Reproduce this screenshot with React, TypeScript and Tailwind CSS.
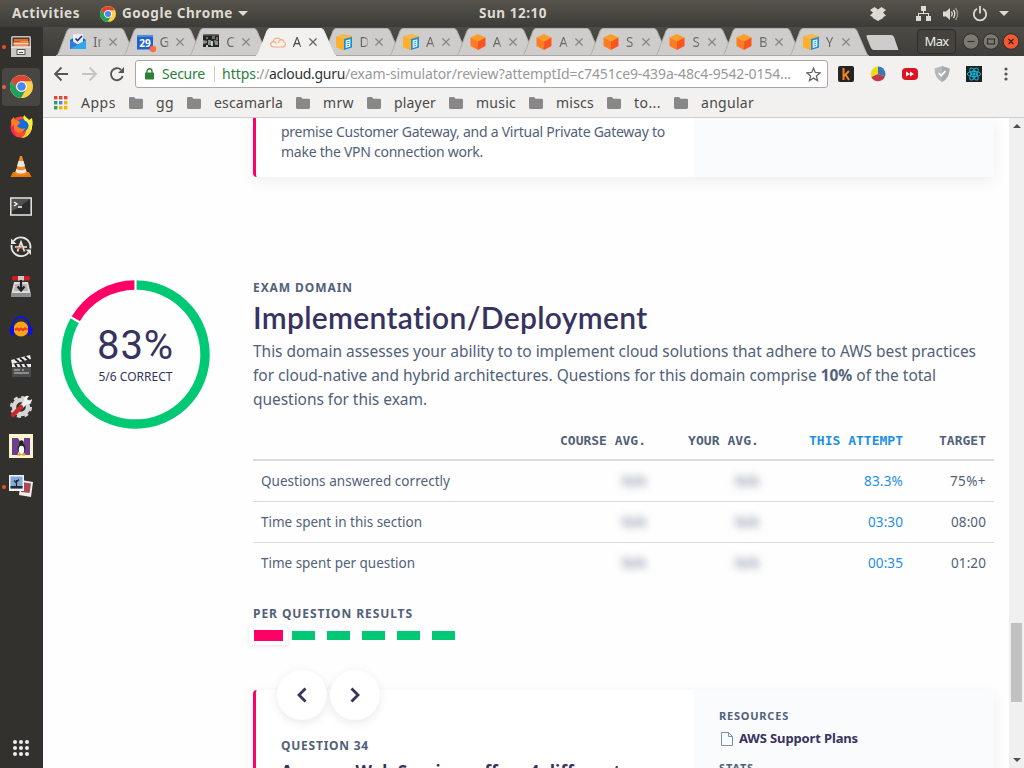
import { useLayoutEffect, useRef, type ReactNode } from "react";

/* Single line of text whose tracking is tuned so that it spans `w` pixels. */
function Fit({ w, className = "", children }: { w: number; className?: string; children: ReactNode }) {
  const ref = useRef<HTMLSpanElement>(null);
  useLayoutEffect(() => {
    const el = ref.current;
    if (!el) return;
    el.style.letterSpacing = "0px";
    const n = (el.textContent || "").length;
    const natural = el.getBoundingClientRect().width;
    el.style.letterSpacing = `${(w - natural) / Math.max(1, n)}px`;
  }, [w]);
  return (
    <span ref={ref} className={`inline-block whitespace-pre ${className}`}>
      {children}
    </span>
  );
}

function Chrome({ size }: { size: number }) {
  return (
    <svg width={size} height={size} viewBox="0 0 24 24">
      <circle cx="12" cy="12" r="12" fill="#fdd04c" />
      <path d="M1.6 6A12 12 0 0 1 22.4 6.5H12A5.5 5.5 0 0 0 7.24 14.75Z" fill="#dc4437" />
      <path d="M1.6 6L7.24 14.75A5.5 5.5 0 0 0 16.76 14.75L11.5 24A12 12 0 0 1 1.6 6Z" fill="#1fa15d" />
      <circle cx="12" cy="12" r="5.6" fill="#fff" />
      <circle cx="12" cy="12" r="4.5" fill="#4687f4" />
    </svg>
  );
}

function TopBar() {
  return (
    <header className="flex h-[27px] shrink-0 items-center bg-linear-to-b from-[#57544c] to-[#3d3c38] text-[13.5px] font-bold text-[#dfdbd2]">
      <div className="flex w-[479px] items-center pl-3">
        <Fit w={68}>Activities</Fit>
        <span className="ml-5 mr-[6px] flex"><Chrome size={16} /></span>
        <Fit w={111}>Google Chrome</Fit>
        <svg className="ml-[5px]" width="10" height="5" viewBox="0 0 10 5"><path d="M0 0H10L5 5Z" fill="#dfdbd2" /></svg>
      </div>
      <Fit w={68}>Sun 12:10</Fit>
      <div className="ml-auto flex items-center pr-[15px]">
        <svg width="16" height="14" viewBox="0 0 16 14" fill="#dfdbd2">
          <path d="M4.5 0L8 2.5L11.5 0L16 3L13 5.6L16 8.5L13.2 10.2V11L8 14L2.8 11V10.2L0 8.5L3 5.6L0 3Z" />
        </svg>
        <svg className="ml-[30px]" width="15" height="15" viewBox="0 0 15 15" fill="#dfdbd2">
          <path d="M5 0H10V5H5ZM0 10H5V15H0ZM10 10H15V15H10ZM7 5H8V8H7ZM2 7H13V10H12V8H3V10H2Z" />
        </svg>
        <svg className="ml-[12px]" width="16" height="14" viewBox="0 0 16 14" fill="none" stroke="#dfdbd2" strokeWidth="1.4">
          <path d="M0 4.5H3L7 1V13L3 9.5H0Z" fill="#dfdbd2" stroke="none" />
          <path d="M8.5 4.5Q10 7 8.5 9.5M10.5 2.8Q13 7 10.5 11.2" />
          <path d="M12.6 1Q16.5 7 12.6 13" opacity=".5" />
        </svg>
        <svg className="ml-[13px]" width="16" height="16" viewBox="0 0 16 16" fill="none" stroke="#dfdbd2" strokeWidth="1.8">
          <path d="M5 2.7A6.2 6.2 0 1 0 11 2.7M8 0V7.5" />
        </svg>
        <svg className="ml-[11px]" width="10" height="5" viewBox="0 0 10 5"><path d="M0 0H10L5 5Z" fill="#dfdbd2" /></svg>
      </div>
    </header>
  );
}

const launcherIcons: { running?: boolean; active?: boolean; art: ReactNode }[] = [
  {
    running: true,
    art: (
      <>
        <rect x="1" y="1" width="20" height="21" rx="1.5" fill="#c4c2be" />
        <rect x="2.5" y="2.5" width="17" height="9.5" fill="#4b3a32" />
        <path d="M4 4H18V6H4Z" fill="#e9692c" />
        <path d="M3.5 6.5H10L11 6H18.5V12H3.5Z" fill="#f08a50" />
        <path d="M3.5 8H18.5V9.3H3.5Z" fill="#fbd0b0" />
        <rect x="1" y="11.5" width="20" height="10.5" fill="#c9c7c4" />
        <path d="M1 11.5H21V12.7H1Z" fill="#eee" />
        <rect x="7" y="14.5" width="8" height="5" fill="#eee" stroke="#555" />
        <path d="M9 17.5H13" stroke="#555" />
      </>
    ),
  },
  { running: true, active: true, art: <g /> },
  {
    art: (
      <>
        <circle cx="11" cy="12" r="10.5" fill="#ff4a2f" />
        <path d="M13 1Q23 5 22 14Q19 23 11 23Q16 20 16 15Z" fill="#ffd22e" />
        <circle cx="12" cy="10.5" r="6.5" fill="#166bd6" />
        <path d="M1 5L4 2L5 5Q9 5 10 8L7 11Q10 15 15 13Q13 19 7 17Q1 14 1 5Z" fill="#ff7a22" />
        <path d="M1 12Q1 20 8 22.5Q3 17 4 10Z" fill="#f81f63" />
        <path d="M14 0L19 5L22 3Q24 11 20 16Q20 7 14 5Z" fill="#fff13d" />
      </>
    ),
  },
  {
    art: (
      <>
        <path d="M3 17H19L21.5 22H.5Z" fill="#e87810" />
        <path d="M10 1H12L17 19Q11 22 5 19Z" fill="#f58a16" />
        <path d="M8.5 6H13.5L15 11Q11 13 7 11ZM6.3 14Q11 16.5 15.8 14L16.5 17Q11 20 5.4 17Z" fill="#e8e8e8" />
      </>
    ),
  },
  {
    art: (
      <>
        <rect x=".8" y="3" width="20.4" height="17" fill="#2c2c2c" stroke="#dedede" strokeWidth="1.6" />
        <path d="M2 4H20L8 13L2 16Z" fill="#505050" />
        <path d="M4 7L7 9L4 11M8 12H12" stroke="#fff" strokeWidth="1.3" fill="none" />
      </>
    ),
  },
  {
    art: (
      <>
        <path d="M3.5 6A9.5 9.5 0 0 1 20.3 13.5M18.5 17.5A9.5 9.5 0 0 1 1.7 10" fill="none" stroke="#e4e4e4" strokeWidth="2" />
        <path d="M1 3.5V9H6.5ZM21 20V14.5H15.5Z" fill="#e4e4e4" />
        <path d="M7.5 16.5L11 7L14.5 16.5" fill="none" stroke="#e4e4e4" strokeWidth="1.8" />
        <path d="M5 12H17" stroke="#e4e4e4" strokeWidth="1.6" />
        <path d="M6 13H13" stroke="#e95420" strokeWidth="1.2" />
      </>
    ),
  },
  {
    art: (
      <>
        <path d="M4 7H18L21 20H1Z" fill="#ddd" />
        <path d="M5 9H17L18 16H4Z" fill="#b5b5b5" />
        <path d="M1 18H21V22H1Z" fill="#8d8d8d" />
        <rect x="2" y="1" width="18" height="4.5" rx="2" fill="#d31b1b" />
        <rect x="8" y="1" width="6" height="4.5" fill="#c9c9c9" />
        <path d="M11 5V14M7.5 11.5L11 15.5L14.5 11.5" stroke="#222" strokeWidth="2.2" fill="none" />
      </>
    ),
  },
  {
    art: (
      <>
        <circle cx="11" cy="14" r="7.5" fill="#f5a51d" />
        <path d="M5 15L7 13.5L9 15L11 13.5L13 15L15 13.5L17.5 14.5" stroke="#f03c16" strokeWidth="2.2" fill="none" />
        <path d="M3 13V9Q5 2 11 2Q17 2 19 9V13" fill="none" stroke="#0918d8" strokeWidth="1.8" />
        <path d="M4 11V21Q-1 20 -.5 14Q0 11 4 11ZM18 11V21Q23 20 22.5 14Q22 11 18 11Z" fill="#0b10e8" />
      </>
    ),
  },
  {
    art: (
      <>
        <path d="M1 5L20 0L21 4L2 9Z" fill="#eee" />
        <path d="M5 4L9 7M10 3L14 6M15 1.5L19 5" stroke="#222" strokeWidth="2" />
        <rect x="2" y="9" width="19" height="13" fill="#4c4c4c" />
        <path d="M2 9H21V12H2Z" fill="#eee" />
        <path d="M5 9L7 12M10 9L12 12M15 9L17 12" stroke="#222" strokeWidth="2" />
        <path d="M4 15H10M12 15H14M4 18H19" stroke="#ccc" strokeWidth="1" />
      </>
    ),
  },
  {
    art: (
      <>
        <circle cx="11" cy="12" r="7" fill="none" stroke="#d6d6d6" strokeWidth="4.5" />
        <circle cx="11" cy="12" r="9.8" fill="none" stroke="#d6d6d6" strokeWidth="2.5" strokeDasharray="4 3.7" />
        <path d="M11 12L17 6" stroke="#f3f3f3" strokeWidth="4" />
        <path d="M14 4Q15 0 19 1L17 4L19 6L22 4Q22 9 17 9Z" fill="#f3f3f3" />
        <path d="M3 20L11 12" stroke="#c92a2a" strokeWidth="4.5" strokeLinecap="round" />
      </>
    ),
  },
  {
    art: (
      <>
        <rect x="-1" y="-1" width="24" height="24" fill="#fdf3cf" />
        <path d="M2 3H8L14 14V3H20V20H15L8 9V20H2Z" fill="#6c3f8c" />
        <ellipse cx="11.5" cy="13.5" rx="3.8" ry="6" fill="#222" />
        <ellipse cx="11.5" cy="15" rx="2.7" ry="4.2" fill="#fff" />
        <circle cx="11.5" cy="7.5" r="2.3" fill="#222" />
        <path d="M7.5 18.5H11V20.5H7.5ZM12 18.5H15.5V20.5H12Z" fill="#f0a020" />
      </>
    ),
  },
  {
    running: true,
    art: (
      <>
        <path d="M11 5L23 7L21 22L9 20Z" fill="#eee" />
        <path d="M12 7L21 8.5L19.5 18L11 17Z" fill="#a84a55" />
        <rect x="-1" y="0" width="15" height="16" fill="#f3f3f3" />
        <rect x=".5" y="1.5" width="12" height="12" fill="#7fabd8" />
        <path d="M.5 11H12.5V13.5H.5Z" fill="#262b33" />
        <path d="M6.5 11V5M6.5 8L4 5.5M6.5 7L9 4.5" stroke="#20252d" strokeWidth="1.2" />
      </>
    ),
  },
];

function Launcher() {
  return (
    <aside className="flex w-[43px] shrink-0 flex-col bg-[#33312e]">
      {launcherIcons.map((it, i) => (
        <div key={i} className="flex h-10 shrink-0 items-center pb-px">
          <span className={`ml-[2px] size-1 shrink-0 rounded-full ${it.running ? "bg-[#e95420]" : ""}`} />
          <div className={`-ml-1 flex h-[38px] w-[38px] shrink-0 items-center justify-center rounded-[4px] ${it.active ? "bg-white/10" : ""}`}>
            {it.active ? (
              <Chrome size={23} />
            ) : (
              <svg width="22" height="23" viewBox="0 0 22 23" className="overflow-visible">{it.art}</svg>
            )}
          </div>
        </div>
      ))}
      <div className="mt-auto mb-[12px] ml-[13px] grid w-4 grid-cols-3 gap-[2px]">
        {Array.from({ length: 9 }, (_, i) => (
          <span key={i} className="size-1 rounded-full bg-[#eeeeec]" />
        ))}
      </div>
    </aside>
  );
}

const orangeCube = (
  <>
    <path d="M8 0L15.5 3.5L8 7.5L.5 3.5Z" fill="#ff9d24" />
    <path d="M.5 3.5L8 7.5V16L.5 12Z" fill="#ff7b22" />
    <path d="M15.5 3.5L8 7.5V16L15.5 12Z" fill="#fb551f" />
  </>
);
const docCube = (
  <>
    <path d="M0 3L7 0L16 2V12L7 16L0 13Z" fill="#f9a825" />
    <path d="M0 3L8 5V15.7L0 13Z" fill="#fdb02a" />
    <path d="M0 3L7 0L16 2L8 5Z" fill="#f6b84f" />
    <path d="M8 5L16 3V13.5L8 16Z" fill="#1593cf" />
    <path d="M9.7 6.5L14.3 5.2V12.5L9.7 14Z" fill="#fff" />
    <path d="M10.5 8L13.5 7.2M10.5 10L13.5 9.2M10.5 12L13 11.3" stroke="#1593cf" strokeWidth=".9" />
  </>
);

const tabs: { t: string; active?: boolean; icon: ReactNode }[] = [
  {
    t: "In",
    icon: (
      <>
        <path d="M0 6L8 1L16 6V15H0Z" fill="#1d64c8" />
        <path d="M3 0H13V9L8 12L3 9Z" fill="#e9eef5" />
        <path d="M5.5 4.5L7.5 6.5L12 2" stroke="#222f91" strokeWidth="1.6" fill="none" />
        <path d="M0 6L8 10.5L16 6V15H0Z" fill="#3478d8" />
        <path d="M0 15L16 6V15Z" fill="#2fa7ee" />
      </>
    ),
  },
  {
    t: "G",
    icon: (
      <>
        <rect width="16" height="14.5" y="1" fill="#1e63cc" />
        <path d="M0 1H16V3H0Z" fill="#4c89df" />
        <text x="8" y="12.5" textAnchor="middle" fontSize="10" fontWeight="700" fill="#fff">29</text>
        <circle cx="16" cy="15" r="3.2" fill="#ff6d3f" />
      </>
    ),
  },
  {
    t: "C",
    icon: (
      <>
        <rect width="16" height="16" fill="#232523" />
        <path d="M0 0H16V1.5H0ZM3 3H5V5H3ZM9 2H12V5H9ZM13 3H15V6H13Z" fill="#6d706a" />
        <path d="M0 6L4 7V9L0 10ZM5 6H8V11H5ZM11 6L15 7V11H12Z" fill="#8d908a" />
        <path d="M0 13H16V16H0ZM8 7H10V12H8ZM3 11H5V14H3Z" fill="#c7cac5" />
      </>
    ),
  },
  {
    t: "A",
    active: true,
    icon: (
      <path d="M4 13Q.7 13 .7 10.3Q.7 8 3.2 7.6Q4 4 7.5 4Q9.5 4 10.8 5.8Q13 5.3 13.7 7.7Q15.5 8.3 15.4 10.4Q15.2 13 12.5 13ZM3.2 7.6Q5.5 7.5 6.5 9.5M10.8 5.8Q8.6 6.8 8.5 9" fill="none" stroke="#fba978" strokeWidth="1.2" />
    ),
  },
  { t: "D", icon: docCube },
  { t: "A", icon: docCube },
  { t: "A", icon: orangeCube },
  { t: "A", icon: orangeCube },
  { t: "S", icon: orangeCube },
  { t: "S", icon: orangeCube },
  { t: "B", icon: orangeCube },
  { t: "Y", icon: docCube },
];

function TabStrip() {
  return (
    <div className="flex h-[29px] items-end bg-linear-to-b from-[#4d4b45] to-[#3e3d39] pl-[13px]">
      {tabs.map(({ t, active, icon }, i) => (
        <div key={i} className={`relative -mr-[13.4px] flex h-7 w-20 shrink-0 items-center pl-[14px] ${active ? "z-10" : ""}`}>
          <svg className="absolute inset-0" width="80" height="28" viewBox="0 0 80 28">
            <path d="M0 28Q2 27 3 24L11 3Q12 .5 14 .5H65Q67 .5 68 3L77 24Q78 27 80 28Z" fill={active ? "#f2f1f0" : "#cfcdcb"} stroke={active ? "#f2f1f0" : "#b1afac"} />
            {!active && <path d="M0 27.5H80" stroke="#aaa8a5" />}
          </svg>
          <svg className="relative overflow-visible" width="16" height="16" viewBox="0 0 16 16">{icon}</svg>
          <span className={`relative ml-[7px] flex w-[9px] overflow-hidden bg-clip-text text-[13.5px] leading-5 whitespace-nowrap text-transparent bg-linear-to-r ${active ? "from-[#444] from-70% to-[#bbb]" : "from-[#666] from-60% to-[#aaa]"}`}>{t}</span>
          <svg className="relative ml-[7px]" width="8" height="8" viewBox="0 0 8 8">
            <path d="M.4 .4L7.6 7.6M7.6 .4L.4 7.6" stroke={active ? "#666" : "#888"} strokeWidth="1.3" />
          </svg>
        </div>
      ))}
      <svg className="mb-[6px] ml-[11px]" width="33" height="15" viewBox="0 0 33 15">
        <path d="M2 0H25Q27 0 28 2L32.5 15H8Q6 15 5 13L.5 2Q0 0 2 0Z" fill="#cfcdcb" />
      </svg>
      <div className="mr-[4px] ml-auto flex h-full items-center">
        <span className="mr-[7px] flex h-[25px] w-[39px] items-center justify-center rounded-[4px] border border-[#2c2b28] bg-[#43423d] text-[13px] text-[#eeece7]">
          <Fit w={24}>Max</Fit>
        </span>
        <svg width="57" height="17" viewBox="0 0 57 17" fill="none">
          <circle cx="8" cy="8.5" r="7.8" fill="#7c7970" stroke="#302f2c" />
          <path d="M4.5 8.5H11.5" stroke="#33322e" strokeWidth="1.2" />
          <circle cx="28" cy="8.5" r="7.8" fill="#7c7970" stroke="#302f2c" />
          <rect x="24.5" y="6" width="7" height="5" stroke="#33322e" strokeWidth="1.2" />
          <circle cx="48" cy="8.5" r="7.8" fill="#ef5a32" stroke="#302f2c" />
          <path d="M45.5 6L50.5 11M50.5 6L45.5 11" stroke="#4b1d10" strokeWidth="1.3" />
        </svg>
      </div>
    </div>
  );
}

function AddressBar() {
  return (
    <div className="flex h-[36px] items-center pl-[11px]">
      <svg width="70" height="16" viewBox="0 0 70 16" fill="none" strokeWidth="1.9">
        <path d="M14 8H1.5M7.5 1.5L1 8L7.5 14.5" stroke="#555" />
        <path d="M28 8H41.5M35.5 1.5L42 8L35.5 14.5" stroke="#c5c4c2" />
        <path d="M68.7 10A6 6 0 1 1 67 3.7" stroke="#555" />
        <path d="M70 1V7H64Z" fill="#555" />
      </svg>
      <div className="ml-[11px] flex h-7 w-[693px] items-center rounded-[3px] border border-[#a9a8a7] bg-white text-[14px]">
        <svg className="ml-[9px]" width="9" height="12" viewBox="0 0 9 12">
          <path d="M2 5V3.2A2.5 2.5 0 0 1 7 3.2V5" fill="none" stroke="#2c8038" strokeWidth="1.4" />
          <rect y="4.5" width="9" height="7" rx=".8" fill="#2c8038" />
        </svg>
        <Fit w={43} className="mb-[2px] ml-[8px] text-[#2c8038]">Secure</Fit>
        <span className="mr-[7px] ml-[9px] h-4 w-px bg-[#ccc]" />
        <Fit w={34} className="mb-[2px] text-[#2c8038]">https</Fit>
        <Fit w={13} className="mb-[2px] text-[#999]">://</Fit>
        <Fit w={76} className="mb-[2px] text-[#333]">acloud.guru</Fit>
        <Fit w={446} className="mb-[2px] text-[#999]">/exam-simulator/review?attemptId=c7451ce9-439a-48c4-9542-0154...</Fit>
        <svg className="mr-[6px] ml-auto" width="15" height="15" viewBox="0 0 15 15">
          <path d="M7.5 1.2L9.3 5.5L14 5.9L10.4 9L11.5 13.6L7.5 11.1L3.5 13.6L4.6 9L1 5.9L5.7 5.5Z" fill="none" stroke="#666" strokeWidth="1.3" />
        </svg>
      </div>
      <div className="ml-[10px] flex items-center gap-4">
        <svg width="16" height="16" viewBox="0 0 16 16">
          <rect width="16" height="16" rx="2" fill="#242424" />
          <path d="M5.5 2V14M11 5L6 10M7.5 8.5L11 14" stroke="#f5831f" strokeWidth="2" fill="none" />
        </svg>
        <svg width="16" height="16" viewBox="0 0 16 16">
          <path d="M8 8V.5A7.5 7.5 0 0 0 1.3 11Z" fill="#eedc18" />
          <path d="M8 8V.5A7.5 7.5 0 0 1 15 10.5Z" fill="#3778b5" />
          <path d="M8 8L15 10.5A7.5 7.5 0 0 1 1.3 11Z" fill="#c23b44" />
        </svg>
        <svg width="16" height="16" viewBox="0 0 16 16">
          <rect y="2" width="16" height="12" rx="4" fill="#dc1523" />
          <path d="M4 5.5L8 8L4 10.5ZM8 5.5L12 8L8 10.5Z" fill="#fff" />
        </svg>
        <svg width="16" height="16" viewBox="0 0 16 16">
          <path d="M8 0L15.5 2.5Q15.5 12 8 16Q.5 12 .5 2.5Z" fill="#b7b8b9" />
          <path d="M8 0L15.5 2.5Q15.5 12 8 16Z" fill="#a9aaab" />
          <path d="M4.7 7L7.2 9.7L11.5 5" stroke="#fff" strokeWidth="1.8" fill="none" />
        </svg>
        <svg width="16" height="16" viewBox="0 0 16 16" fill="none" stroke="#17b6d4">
          <rect width="16" height="16" fill="#1f1f24" stroke="none" />
          <ellipse cx="8" cy="8" rx="6.7" ry="2.6" />
          <ellipse cx="8" cy="8" rx="6.7" ry="2.6" transform="rotate(60 8 8)" />
          <ellipse cx="8" cy="8" rx="6.7" ry="2.6" transform="rotate(120 8 8)" />
          <circle cx="8" cy="8" r="1.2" fill="#17b6d4" />
        </svg>
        <svg width="16" height="16" viewBox="0 0 16 16" fill="#555">
          <circle cx="8" cy="3" r="1.6" /><circle cx="8" cy="8" r="1.6" /><circle cx="8" cy="13" r="1.6" />
        </svg>
      </div>
    </div>
  );
}

const bookmarks: [string, number][] = [
  ["gg", 18], ["escamarla", 69], ["mrw", 31], ["player", 42], ["music", 40], ["miscs", 38], ["to...", 27], ["angular", 53],
];
const appDots = ["#e8453c", "#e8453c", "#e8453c", "#2c9f58", "#4285f4", "#f4b400", "#2c9f58", "#f4b400", "#f4b400"];

function Bookmarks() {
  return (
    <div className="flex h-[26px] items-center gap-[13px] border-b border-[#cfcecd] pb-[4px] pl-[11px] text-[14px] text-[#4a4a4a]">
      <svg width="14" height="14" viewBox="0 0 14 14">
        {appDots.map((c, i) => <rect key={i} x={(i % 3) * 5} y={Math.floor(i / 3) * 5} width="3.4" height="3.4" fill={c} />)}
      </svg>
      <Fit w={35}>Apps</Fit>
      {bookmarks.map(([n, w]) => (
        <div key={n} className="flex items-center gap-[13px]">
          <svg width="14" height="12" viewBox="0 0 14 12"><path d="M1.3 0H5L6.5 1.7H12.7Q14 1.7 14 3V10.6Q14 12 12.7 12H1.3Q0 12 0 10.6V1.3Q0 0 1.3 0Z" fill="#888" /></svg>
          <Fit w={w}>{n}</Fit>
        </div>
      ))}
    </div>
  );
}

function Donut() {
  const pt = (deg: number, r: number) => {
    const a = (deg * Math.PI) / 180;
    return `${75 + r * Math.sin(a)} ${75 - r * Math.cos(a)}`;
  };
  return (
    <div className="relative size-[149px]">
      <svg width="149" height="149" viewBox="0 0 150 150" fill="none">
        <path d={`M${pt(0, 70)}A70 70 0 1 1 ${pt(300, 70)}`} stroke="#00c873" strokeWidth="9.5" />
        <path d={`M${pt(300, 70)}A70 70 0 0 1 ${pt(0, 70)}`} stroke="#ff0066" strokeWidth="9.5" />
        <path d={`M${pt(0, 64)}L${pt(0, 76)}M${pt(300, 64)}L${pt(300, 76)}`} stroke="#fefefe" strokeWidth="2.2" />
      </svg>
      <div className="absolute inset-0 flex flex-col items-center pt-[44px] text-[#36335f]">
        <Fit w={77} className="font-[Roboto] text-[40px] leading-[44px]">83%</Fit>
        <Fit w={74} className="text-[12px] leading-[17px]">5/6 CORRECT</Fit>
      </div>
    </div>
  );
}

const rows = [
  { label: "Questions answered correctly", lw: 189, a: "83.3%", aw: 39, t: "75%+", tw: 36 },
  { label: "Time spent in this section", lw: 161, a: "03:30", aw: 35, t: "08:00", tw: 35 },
  { label: "Time spent per question", lw: 154, a: "00:35", aw: 35, t: "01:20", tw: 35 },
];
const cols = "grid grid-cols-[1fr_120px_113px_144px_83px] items-center pr-2 text-right";

function Stats() {
  return (
    <div className="mt-[15px]">
      <div className={`${cols} h-[37px] border-b-2 border-[#dadbdd] pb-[2px] font-['DejaVu_Sans_Mono',monospace] text-[13px] font-bold text-[#51617a]`}>
        <span />
        <Fit w={86} className="justify-self-end">COURSE AVG.</Fit>
        <Fit w={71} className="justify-self-end">YOUR AVG.</Fit>
        <Fit w={94} className="justify-self-end text-[#1f8fe6]">THIS ATTEMPT</Fit>
        <Fit w={47} className="justify-self-end">TARGET</Fit>
      </div>
      {rows.map((r, i) => (
        <div key={r.label} className={`${cols} ${i < 2 ? "border-b border-[#dadbdd]" : ""} h-[41px] text-[13.5px] text-[#51617a]`}>
          <Fit w={r.lw} className="ml-2 justify-self-start">{r.label}</Fit>
          <span className="blur-[4px]">N/A</span>
          <span className="blur-[4px]">N/A</span>
          <Fit w={r.aw} className="justify-self-end text-[#1f8fe6]">{r.a}</Fit>
          <Fit w={r.tw} className="justify-self-end">{r.t}</Fit>
        </div>
      ))}
    </div>
  );
}

function RoundButton({ d }: { d: string }) {
  return (
    <button className="flex size-[50px] items-center justify-center rounded-full bg-white shadow-[0_3px_10px_rgba(50,50,93,0.1)]">
      <svg width="12" height="16" viewBox="0 0 12 16"><path d={d} fill="none" stroke="#36335f" strokeWidth="2.8" /></svg>
    </button>
  );
}

function Page() {
  return (
    <main className="flex min-h-0 flex-1 overflow-hidden bg-[#fefefe]">
      <div className="flex w-[966px] shrink-0 pl-[18px] text-[#51617a]">
        <div className="w-[192px] shrink-0 pt-[162px]"><Donut /></div>
        <div className="w-[741px] shrink-0">
          <section className="flex h-[59px] rounded-b-[4px] border-l-[3px] border-[#ff0066] bg-white shadow-[0_4px_14px_rgba(50,50,93,0.08)]">
            <div className="flex w-[438px] flex-col pt-1 pl-[25px] text-[14px] leading-5">
              <Fit w={384} className="self-start">premise Customer Gateway, and a Virtual Private Gateway to</Fit>
              <Fit w={202} className="self-start">make the VPN connection work.</Fit>
            </div>
            <div className="flex-1 rounded-br-[4px] bg-[#fafbfd]" />
          </section>

          <div className="flex h-[232px] flex-col items-start pt-[102px]">
            <Fit w={100} className="text-[12px] leading-[18px] font-bold">EXAM DOMAIN</Fit>
            <Fit w={395} className="mt-[1px] font-[Lato] text-[30px] leading-[38px] font-semibold text-[#36335f]">Implementation/Deployment</Fit>
            <div className="mt-[3px] flex flex-col items-start text-[15.5px] leading-6">
              <Fit w={723}>This domain assesses your ability to to implement cloud solutions that adhere to AWS best practices</Fit>
              <Fit w={683}>for cloud-native and hybrid architectures. Questions for this domain comprise <b>10%</b> of the total</Fit>
              <Fit w={174}>questions for this exam.</Fit>
            </div>
          </div>

          <Stats />

          <div className="flex h-[106px] flex-col items-start pt-[21px]">
            <Fit w={160} className="text-[12px] leading-[18px] font-bold">PER QUESTION RESULTS</Fit>
            <div className="mt-[3px] flex h-[19px] items-center">
              <span className="-ml-1 mr-1 flex h-[19px] w-[39px] items-center justify-center bg-white shadow-[0_1px_4px_rgba(50,50,93,0.12)]">
                <i className="h-[11px] w-[29px] bg-[#ff0066]" />
              </span>
              {[0, 1, 2, 3, 4].map((i) => <i key={i} className="mr-3 h-[9px] w-[23px] bg-[#00c873]" />)}
            </div>
          </div>

          <section className="relative flex h-[120px] rounded-t-[4px] border-l-[3px] border-[#ff0066] bg-white shadow-[0_4px_14px_rgba(50,50,93,0.08)]">
            <div className="flex w-[438px] flex-col items-start pt-[47px] pl-[25px]">
              <Fit w={88} className="text-[12px] leading-[18px] font-bold">QUESTION 34</Fit>
              <Fit w={340} className="mt-[5px] text-[17px] leading-6 font-bold text-[#36335f]">Amazon Web Services offers 4 different</Fit>
            </div>
            <div className="flex flex-1 flex-col items-start bg-[#fafbfd] pt-[18px] pl-[25px]">
              <Fit w={70} className="text-[11px] leading-4 font-bold">RESOURCES</Fit>
              <div className="mt-[5px] flex h-5 items-center">
                <svg className="mr-[6px] ml-[2px]" width="12" height="14" viewBox="0 0 12 14" fill="none" stroke="#7d92ab">
                  <path d="M.5 .5H7.5L11.5 4.5V13.5H.5ZM7.5 .5V4.5H11.5" />
                </svg>
                <Fit w={119} className="text-[13px] font-bold text-[#36335f]">AWS Support Plans</Fit>
              </div>
              <Fit w={35} className="mt-[11px] text-[11px] leading-4 font-bold">STATS</Fit>
            </div>
            <div className="absolute -top-5 left-[20.5px] flex gap-[3px]">
              <RoundButton d="M9.5 1.5L3 8L9.5 14.5" />
              <RoundButton d="M2.5 1.5L9 8L2.5 14.5" />
            </div>
          </section>
        </div>
      </div>
      <div className="flex w-[15px] shrink-0 flex-col items-center bg-[#f0f0f0] py-[6px]">
        <svg width="8" height="4" viewBox="0 0 8 4"><path d="M0 4H8L4 0Z" fill="#505050" /></svg>
        <span className="mt-[495px] h-[79px] w-[11px] bg-[#c1c1c1]" />
        <svg className="mt-auto" width="8" height="4" viewBox="0 0 8 4"><path d="M0 0H8L4 4Z" fill="#505050" /></svg>
      </div>
    </main>
  );
}

export default function App() {
  return (
    <div className="flex h-[768px] w-[1024px] flex-col overflow-hidden font-['Noto_Sans',sans-serif]">
      <TopBar />
      <div className="flex min-h-0 flex-1">
        <Launcher />
        <div className="flex w-[981px] flex-col bg-[#f2f1f0]">
          <TabStrip />
          <AddressBar />
          <Bookmarks />
          <Page />
        </div>
      </div>
    </div>
  );
}
